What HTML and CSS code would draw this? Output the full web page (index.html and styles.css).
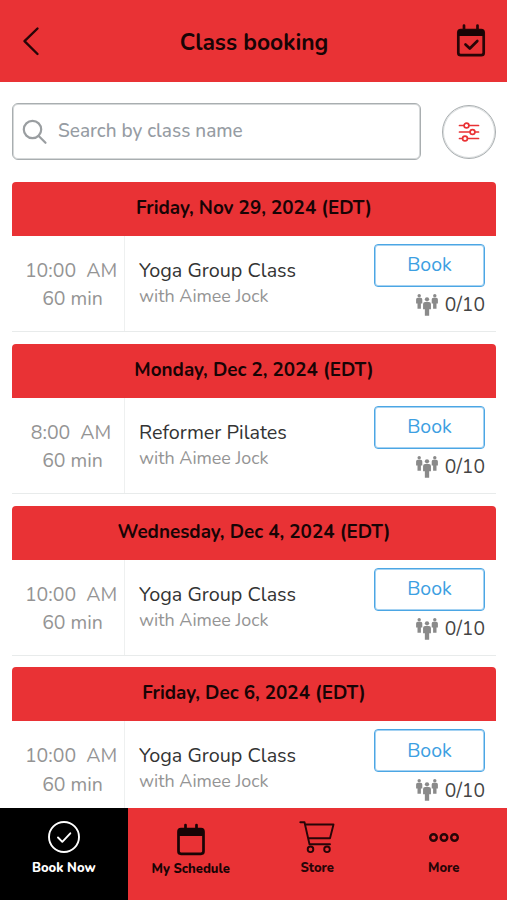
FILE: index.html
```
<!DOCTYPE html>
<html lang="en">
<head>
<meta charset="utf-8">
<meta name="viewport" content="width=device-width, initial-scale=1">
<title>Class booking</title>
<link rel="stylesheet" href="styles.css">
</head>
<body>
<svg width="0" height="0" class="defs" aria-hidden="true">
  <defs>
    <g id="person"><circle cx="3" cy="1.7" r="1.7"/><path d="M1.500 3.800h3q1.600 0 1.600 1.600v4.100H4.700v5.200H1.300V9.500H-.100V5.400q0-1.600 1.600-1.600z"/></g>
    <symbol id="people" viewBox="0 0 22 22"><use href="#person" x=".200"/><use href="#person" x="15.800"/><use href="#person" transform="translate(7.200 3.200) scale(1.270)"/></symbol>
  </defs>
</svg>
<div class="app">
  <header class="topbar">
    <svg class="back" viewBox="0 0 18 30"><path d="M15.500 2.500 2.500 15.200 15.500 28"/></svg>
    <h1>Class booking</h1>
    <svg class="calendar" viewBox="0 0 30 34"><path d="M8 1.500v6M21.500 1.500v6"/><rect x="2.300" y="6" width="25.400" height="25.200" rx="2.500"/><path d="M2 6h26v6H2z" class="solid"/><path d="m9.500 20.500 4.300 4 7.500-7.500"/></svg>
  </header>
  <div class="filters">
    <div class="search">
      <svg viewBox="0 0 26 26"><circle cx="10.500" cy="10.500" r="8.700"/><path d="m16.700 17 6.800 6.800"/></svg>
      <span>Search by class name</span>
    </div>
    <div class="tune"><svg viewBox="0 0 22 20"><path d="M1.500 3.500h19M1.500 10h19M1.500 16.500h19"/><circle cx="8.500" cy="3.500" r="2.400"/><circle cx="14.500" cy="10" r="2.400"/><circle cx="7" cy="16.500" r="2.400"/></svg></div>
  </div>
  <main>
    <section>
      <h2>Friday, Nov 29, 2024 (EDT)</h2>
      <div class="row">
        <div class="time"><span class="hour">10:00&nbsp; AM</span><span class="length">60 min</span></div>
        <div class="info"><span class="name">Yoga Group Class</span><span class="coach">with Aimee Jock</span></div>
        <div class="action"><button>Book</button><div class="spots"><svg><use href="#people"/></svg><span>0/10</span></div></div>
      </div>
    </section>
    <section>
      <h2>Monday, Dec 2, 2024 (EDT)</h2>
      <div class="row">
        <div class="time"><span class="hour">8:00&nbsp; AM</span><span class="length">60 min</span></div>
        <div class="info"><span class="name">Reformer Pilates</span><span class="coach">with Aimee Jock</span></div>
        <div class="action"><button>Book</button><div class="spots"><svg><use href="#people"/></svg><span>0/10</span></div></div>
      </div>
    </section>
    <section>
      <h2>Wednesday, Dec 4, 2024 (EDT)</h2>
      <div class="row">
        <div class="time"><span class="hour">10:00&nbsp; AM</span><span class="length">60 min</span></div>
        <div class="info"><span class="name">Yoga Group Class</span><span class="coach">with Aimee Jock</span></div>
        <div class="action"><button>Book</button><div class="spots"><svg><use href="#people"/></svg><span>0/10</span></div></div>
      </div>
    </section>
    <section>
      <h2>Friday, Dec 6, 2024 (EDT)</h2>
      <div class="row">
        <div class="time"><span class="hour">10:00&nbsp; AM</span><span class="length">60 min</span></div>
        <div class="info"><span class="name">Yoga Group Class</span><span class="coach">with Aimee Jock</span></div>
        <div class="action"><button>Book</button><div class="spots"><svg><use href="#people"/></svg><span>0/10</span></div></div>
      </div>
    </section>
  </main>
  <nav>
    <a class="active"><svg viewBox="0 0 36 36"><circle cx="18" cy="18" r="15"/><path d="m12 18.500 4.300 4.300 8-8.500"/></svg><span>Book Now</span></a>
    <a class="schedule"><svg viewBox="0 0 36 36"><path d="M12.500 5v6M23.500 5v6"/><rect x="5.500" y="9.200" width="25" height="24.600" rx="2.500"/><path class="solid" d="M5 9h26v7H5z"/></svg><span>My Schedule</span></a>
    <a><svg viewBox="0 0 36 36"><path d="M1.300 3.300h4.200l5 21.900h20.500M6.200 5.500h28.300l-3.500 13.700H9.200"/><circle cx="11.500" cy="30.300" r="2.800"/><circle cx="28" cy="30.300" r="2.800"/></svg><span>Store</span></a>
    <a><svg class="dots" viewBox="0 0 36 36"><circle cx="7.500" cy="18.500" r="3.300"/><circle cx="18" cy="18.500" r="3.300"/><circle cx="28.500" cy="18.500" r="3.300"/></svg><span>More</span></a>
  </nav>
</div>
</body>
</html>
```
FILE: styles.css
```
* { box-sizing: border-box; }
body { margin: 0; background: #fff; font-family: Nunito, Lato, sans-serif; }
h1, h2 { margin: 0; font-weight: 700; white-space: nowrap; }
svg { display: block; flex: none; fill: none; stroke-linecap: round; stroke-linejoin: round; }
.defs { position: absolute; }
.app { height: 900px; display: flex; flex-direction: column; overflow: hidden; }

.topbar { flex: none; height: 82px; padding: 0 21px 0 22px; display: flex; align-items: center; justify-content: space-between; background: #e93235; color: #180405; }
.topbar h1 { font-size: 22.8px; line-height: 28px; padding: 3px 0 0 12px; }
.back { width: 18px; height: 30px; stroke: #270507; stroke-width: 2.4; }
.calendar { width: 30px; height: 34px; stroke: #270507; stroke-width: 2.7; }
.calendar .solid, .schedule .solid { fill: currentColor; stroke: none; }

.filters { flex: none; height: 99.600px; padding: 21px 11px 0 12px; display: flex; justify-content: space-between; align-items: flex-start; }
.search { width: 409px; height: 57px; border: 1px solid #a9aeb0; box-shadow: inset 0 0 0 1px #d5d8d9; border-radius: 6px; display: flex; align-items: center; padding-left: 9px; gap: 10px; color: #969ca3; font-size: 19px; font-weight: 500; }
.search svg { width: 26px; height: 26px; stroke: #9a9ea1; stroke-width: 2.2; }
.search span { line-height: 24px; padding-bottom: 1px; white-space: nowrap; }
.tune { width: 54px; height: 54px; margin-top: 2px; border: 1px solid #a9aeb0; box-shadow: inset 0 0 0 1px #dcdfe0; border-radius: 50%; display: flex; align-items: center; justify-content: center; }
.tune svg { width: 22px; height: 20px; stroke: #e93235; stroke-width: 1.7; }
.tune circle { fill: #fff; }

main { flex: 1; min-height: 0; overflow: hidden; padding: 0 11px 0 12px; display: flex; flex-direction: column; gap: 11.960px; }
section { flex: none; }
h2 { height: 54px; line-height: 53.500px; text-align: center; background: #e93235; color: #180405; border-radius: 4px 4px 0 0; font-size: 18.850px; }
.row { height: 96px; display: flex; border-bottom: 1px solid #e8ebeb; }
.time { width: 113px; border-right: 1px solid #eef0f0; padding: 21px 0 0 6px; display: flex; flex-direction: column; align-items: center; color: #949494; font-size: 19.500px; line-height: 28.800px; white-space: nowrap; }
.length { padding-left: 3px; }
.info { flex: 1; padding: 22px 0 0 14px; display: flex; flex-direction: column; white-space: nowrap; }
.name { font-size: 19.800px; line-height: 26px; color: #333; }
.coach { font-size: 17.900px; line-height: 24px; color: #949494; }
.action { width: 111px; margin-right: 11px; padding-top: 8px; display: flex; flex-direction: column; }
button { height: 43px; padding: 0; border: 1px solid #4ba6e4; box-shadow: inset 0 0 0 1px #a5d2f2; border-radius: 4px; background: #fff; color: #3d9fe2; font: 19.500px/40px Nunito, Lato, sans-serif; }
.spots { display: flex; justify-content: flex-end; align-items: center; gap: 7px; height: 36px; font-size: 19.300px; color: #444; }
.spots svg { width: 22px; height: 22px; fill: #8a8a8a; }

nav { flex: none; height: 92px; display: grid; grid-template-columns: 127.500px repeat(3, 1fr); background: #e93235; color: #270507; }
nav a { display: flex; flex-direction: column; align-items: center; padding-top: 11px; font-size: 13px; font-weight: 800; line-height: 18px; }
nav svg { width: 36px; height: 36px; margin-bottom: 4px; stroke: currentColor; stroke-width: 1.9; }
nav .active { background: #000; color: #fff; }
nav .schedule { color: #180405; padding-top: 12px; }
nav .schedule svg { stroke-width: 2.7; }
nav .dots { stroke-width: 2.4; }
```
